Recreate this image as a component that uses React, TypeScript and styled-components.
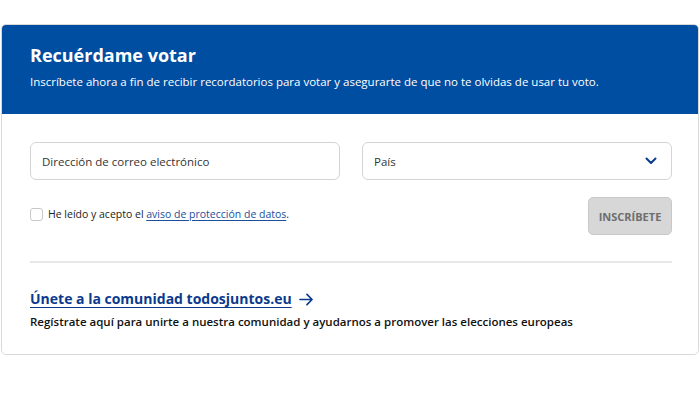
import styled, { createGlobalStyle } from "styled-components";

const GlobalStyle = createGlobalStyle`
  body {
    margin: 0;
    background: #fff;
    font-family: "Open Sans", "Liberation Sans", sans-serif;
  }
`;

const App = () => {
  return (
    <>
      <GlobalStyle />
      <Page>
        <Card>
          <Header>
            <Title>Recuérdame votar</Title>
            <Subtitle>
              Inscríbete ahora a fin de recibir recordatorios para votar y asegurarte de que no te olvidas de usar tu voto.
            </Subtitle>
          </Header>
          <Body>
            <FieldRow>
              <Field>
                <Placeholder>Dirección de correo electrónico</Placeholder>
              </Field>
              <Field>
                <Placeholder>País</Placeholder>
                <Chevron viewBox="0 0 12 8" width="12" height="8">
                  <path d="M1.5 1.5 6 6l4.5-4.5" fill="none" stroke="#0b3a8c" strokeWidth="2" strokeLinecap="round" strokeLinejoin="round" />
                </Chevron>
              </Field>
            </FieldRow>
            <ConsentRow>
              <Consent>
                <Checkbox />
                <span>
                  He leído y acepto el <PolicyLink href="#">aviso de protección de datos</PolicyLink>.
                </span>
              </Consent>
              <SubmitButton disabled>Inscríbete</SubmitButton>
            </ConsentRow>
            <Divider />
            <Community>
              <CommunityLink href="#">
                <span>Únete a la comunidad todosjuntos.eu</span>
                <svg viewBox="0 0 16 14" width="15" height="13">
                  <path d="M1 7h13M8.5 1.5 14 7l-5.5 5.5" fill="none" stroke="#0b3a8c" strokeWidth="1.8" strokeLinecap="round" strokeLinejoin="round" />
                </svg>
              </CommunityLink>
              <CommunityText>
                Regístrate aquí para unirte a nuestra comunidad y ayudarnos a promover las elecciones europeas
              </CommunityText>
            </Community>
          </Body>
        </Card>
      </Page>
    </>
  );
};

const Page = styled.div`
  padding: 24px 1px 0 1px;
`;

const Card = styled.section`
  width: 698px;
  box-sizing: border-box;
  border: 1px solid #d9d9d9;
  border-radius: 5px;
  overflow: hidden;
  background: #fff;
`;

const Header = styled.div`
  background: #004ea1;
  color: #fff;
  height: 89px;
  box-sizing: border-box;
  padding: 18px 28px 0 28px;
`;

const Title = styled.h2`
  margin: 0;
  font-size: 18px;
  font-weight: 700;
  line-height: 24px;
`;

const Subtitle = styled.p`
  margin: 7px 0 0 0;
  font-size: 11.5px;
  line-height: 16px;
`;

const Body = styled.div`
  padding: 28px 26px 25px 28px;
`;

const FieldRow = styled.div`
  display: grid;
  grid-template-columns: 1fr 1fr;
  column-gap: 22px;
`;

const Field = styled.div`
  height: 38px;
  box-sizing: border-box;
  border: 1px solid #d4d4d4;
  border-radius: 6px;
  padding: 0 14px 0 11px;
  display: flex;
  align-items: center;
  justify-content: space-between;
`;

const Placeholder = styled.span`
  font-size: 11.5px;
  color: #333;
`;

const Chevron = styled.svg`
  display: block;
`;

const ConsentRow = styled.div`
  margin-top: 17px;
  display: flex;
  align-items: center;
  justify-content: space-between;
`;

const Consent = styled.label`
  display: flex;
  align-items: center;
  gap: 5px;
  font-size: 10.5px;
  color: #222;
  margin-top: -4px;
`;

const Checkbox = styled.span`
  width: 11px;
  height: 11px;
  border: 1px solid #c8c8c8;
  border-radius: 3px;
`;

const PolicyLink = styled.a`
  color: #1a4f9c;
  text-decoration: underline;
  text-underline-offset: 2px;
`;

const SubmitButton = styled.button`
  width: 84px;
  height: 38px;
  background: #d7d7d7;
  border: 1px solid #c9c9c9;
  border-radius: 5px;
  color: #6e6e6e;
  font-family: inherit;
  font-size: 11px;
  font-weight: 700;
  text-transform: uppercase;
  padding: 0;
`;

const Divider = styled.hr`
  margin: 26px 0 0 0;
  border: none;
  border-top: 2px solid #e8e8e8;
`;

const Community = styled.div`
  padding-top: 24px;
`;

const CommunityLink = styled.a`
  display: inline-flex;
  align-items: center;
  gap: 7px;
  color: #0b3a8c;
  font-size: 14px;
  font-weight: 700;
  line-height: 20px;
  text-decoration: none;
  span {
    text-decoration: underline;
    text-underline-offset: 3px;
  }
`;

const CommunityText = styled.p`
  margin: 5px 0 0 0;
  font-size: 11.5px;
  font-weight: 600;
  color: #111;
  line-height: 15px;
`;

export default App;
